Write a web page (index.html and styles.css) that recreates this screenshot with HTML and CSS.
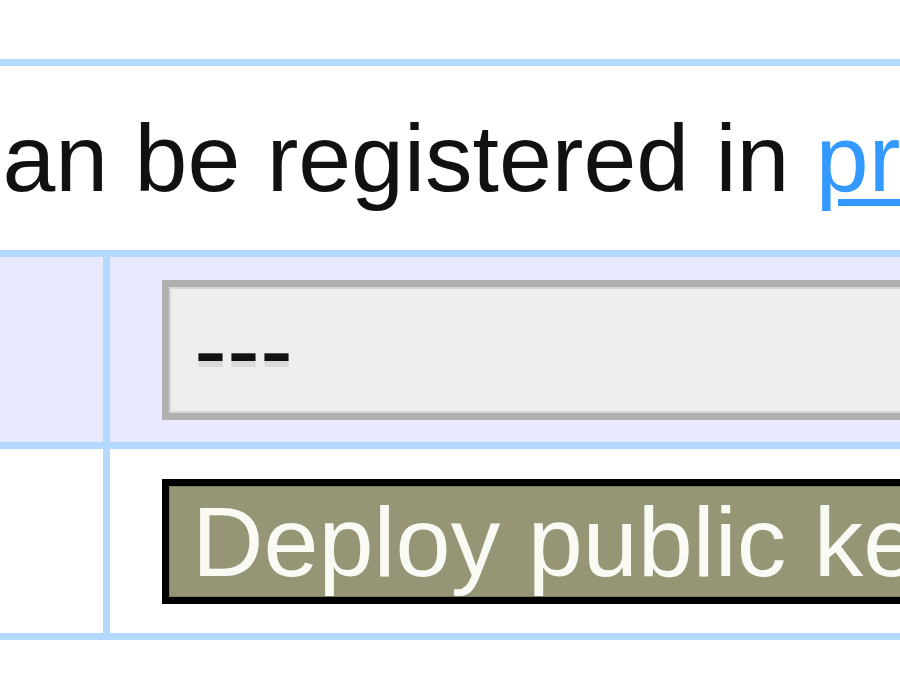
FILE: index.html
```html
<!DOCTYPE html>
<html lang="en">
<head>
<meta charset="utf-8">
<title>Keys</title>
<link rel="stylesheet" href="styles.css">
</head>
<body>
<div class="panel">
  <p class="note">can be registered in <a href="#">preferences</a></p>
  <div class="grid">
    <div class="row row-a">
      <div class="label"></div>
      <div class="field"><div class="select">---</div></div>
    </div>
    <div class="row row-b">
      <div class="label"></div>
      <div class="field"><button class="btn" type="button">Deploy public key</button></div>
    </div>
  </div>
</div>
</body>
</html>
```
FILE: styles.css
```css
html, body {
  margin: 0;
  padding: 0;
}
body {
  width: 900px;
  height: 700px;
  overflow: hidden;
  background: #ffffff;
  font-family: "Liberation Sans", Arial, sans-serif;
  font-size: 95px;
  color: #111111;
}
.panel {
  margin-top: 59px;
  border-top: 7px solid #b3d9ff;
}
.note {
  margin: 0;
  padding: 37px 0;
  line-height: 110px;
  white-space: nowrap;
  text-indent: -45px;
}
.note a {
  color: #3399ff;
  text-decoration: underline;
  text-decoration-thickness: 7px;
  text-underline-offset: 8px;
}
.grid {
  border-top: 7px solid #b3d9ff;
}
.row {
  display: grid;
  grid-template-columns: 110px minmax(0, 1fr);
  border-bottom: 7px solid #b3d9ff;
}
.label {
  border-right: 7px solid #b3d9ff;
}
.field {
  overflow: hidden;
}
.row-a {
  background: #e8e8ff;
}
.row-b {
  background: #ffffff;
}
.row-a .field {
  padding: 23px 0 22px 52px;
}
.row-b .field {
  padding: 30px 0 29px 52px;
}
.select {
  box-sizing: border-box;
  width: 1000px;
  height: 140px;
  border: 7px solid #b0b0b0;
  box-shadow: inset 0 0 0 2px #d6d6d6;
  background: #eeeeee;
  padding-left: 25px;
  font-size: 99px;
  line-height: 124px;
  white-space: nowrap;
  color: #111111;
  text-shadow: 0 6px 0 #d9d9d9;
}
.btn {
  display: block;
  box-sizing: border-box;
  width: 1000px;
  height: 125px;
  margin: 0;
  border: 7px solid #000000;
  box-shadow: inset 0 0 0 1px #7d7d62;
  background: #969676;
  color: #fafaf5;
  font: inherit;
  font-size: 99px;
  line-height: 109px;
  padding: 0 0 0 23px;
  text-align: left;
  white-space: nowrap;
}
```
